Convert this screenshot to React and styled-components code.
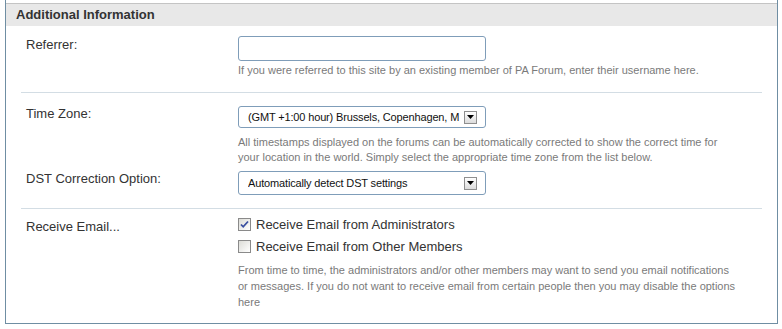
import styled, { createGlobalStyle } from "styled-components";

const GlobalStyle = createGlobalStyle`
  html, body {
    margin: 0;
    padding: 0;
    background: #ffffff;
  }
  body {
    font-family: "Liberation Sans", Arial, sans-serif;
    color: #333333;
  }
`;

const Panel = styled.div`
  margin-left: 5px;
  width: 771px;
  border: 1px solid #6f8ea3;
  border-top: none;
  padding-top: 3px;
  background: #ffffff;
`;

const Header = styled.div`
  height: 22px;
  line-height: 22px;
  border-top: 1px solid #c4c4c4;
  background: #e8e8e8;
  padding-left: 10px;
  font-size: 13px;
  font-weight: bold;
  color: #333333;
`;

const Section = styled.div`
  margin: 0 15px;
  padding: ${(p) => p.$pad};
  border-bottom: ${(p) => (p.$last ? "none" : "1px solid #d3dde4")};
`;

const Field = styled.div`
  display: grid;
  grid-template-columns: 212px 1fr;
  padding-left: 5px;
  margin-top: ${(p) => p.$gap || 0}px;
`;

const Label = styled.div`
  font-size: 13px;
  line-height: 16px;
  color: #333333;
  padding-top: ${(p) => p.$top || 0}px;
`;

const Control = styled.div`
  display: flex;
  flex-direction: column;
  align-items: flex-start;
`;

const TextInput = styled.input`
  box-sizing: border-box;
  width: 248px;
  height: 25px;
  border: 1px solid #7f9db9;
  border-radius: 3px;
  padding: 0 6px;
  font-family: inherit;
  font-size: 11px;
  outline: none;
`;

const SelectBox = styled.div`
  box-sizing: border-box;
  width: 248px;
  height: ${(p) => p.$h}px;
  border: 1px solid #7f9db9;
  border-radius: 3px;
  display: flex;
  align-items: center;
  padding: 0 8px 0 9px;
  font-size: 11px;
  color: #111111;
`;

const SelectText = styled.span`
  flex: 1;
  min-width: 0;
  white-space: nowrap;
  overflow: hidden;
  letter-spacing: -0.15px;
`;

const DropButton = styled.span`
  flex: none;
  width: 11px;
  height: 11px;
  margin-left: 3px;
  border: 1px solid #8f8f8f;
  background: linear-gradient(#ffffff, #dcdcdc);
  display: flex;
  align-items: center;
  justify-content: center;
`;

const Help = styled.div`
  margin-top: ${(p) => p.$top || 0}px;
  font-size: 11px;
  line-height: ${(p) => p.$lh || 15}px;
  color: #7a7a7a;
  max-width: ${(p) => p.$w || 480}px;
`;

const CheckRow = styled.label`
  display: flex;
  align-items: center;
  height: 22px;
  font-size: 13px;
  color: #333333;
`;

const Box = styled.span`
  box-sizing: border-box;
  width: 13px;
  height: 13px;
  margin-right: 5px;
  border: 1px solid #8a8a8a;
  background: linear-gradient(135deg, #dcdcd7, #ffffff);
  display: flex;
  align-items: center;
  justify-content: center;
`;

const Arrow = () => (
  <svg width="7" height="4" viewBox="0 0 7 4">
    <path d="M0 0h7L3.5 4z" fill="#000" />
  </svg>
);

const Select = ({ value, h }) => (
  <SelectBox $h={h}>
    <SelectText>{value}</SelectText>
    <DropButton>
      <Arrow />
    </DropButton>
  </SelectBox>
);

const Checkbox = ({ checked, children }) => (
  <CheckRow>
    <Box>
      {checked && (
        <svg width="9" height="9" viewBox="0 0 9 9">
          <path d="M1 4.5l2.2 2.3L8 1.5" stroke="#3a4fa0" strokeWidth="1.8" fill="none" />
        </svg>
      )}
    </Box>
    {children}
  </CheckRow>
);

export default function App() {
  return (
    <>
      <GlobalStyle />
      <Panel>
        <Header>Additional Information</Header>

        <Section $pad="10px 0 14px 0">
          <Field>
            <Label $top={1}>Referrer:</Label>
            <Control>
              <TextInput type="text" />
              <Help $top={1} $lh={16} $w={520}>
                If you were referred to this site by an existing member of PA Forum, enter their username here.
              </Help>
            </Control>
          </Field>
        </Section>

        <Section $pad="13px 0 13px 0">
          <Field>
            <Label $top={-2}>Time Zone:</Label>
            <Control>
              <Select h={22} value="(GMT +1:00 hour) Brussels, Copenhagen, M" />
              <Help $top={7}>
                All timestamps displayed on the forums can be automatically corrected to show the correct time for
                your location in the world. Simply select the appropriate time zone from the list below.
              </Help>
            </Control>
          </Field>
          <Field $gap={6}>
            <Label $top={-1}>DST Correction Option:</Label>
            <Control>
              <Select h={24} value="Automatically detect DST settings" />
            </Control>
          </Field>
        </Section>

        <Section $pad="4px 0 13px 0" $last>
          <Field>
            <Label $top={6}>Receive Email...</Label>
            <Control>
              <Checkbox checked>Receive Email from Administrators</Checkbox>
              <Checkbox>Receive Email from Other Members</Checkbox>
              <Help $top={5} $lh={16} $w={520}>
                From time to time, the administrators and/or other members may want to send you email notifications
                <br />
                or messages. If you do not want to receive email from certain people then you may disable the options
                <br />
                here
              </Help>
            </Control>
          </Field>
        </Section>
      </Panel>
    </>
  );
}
